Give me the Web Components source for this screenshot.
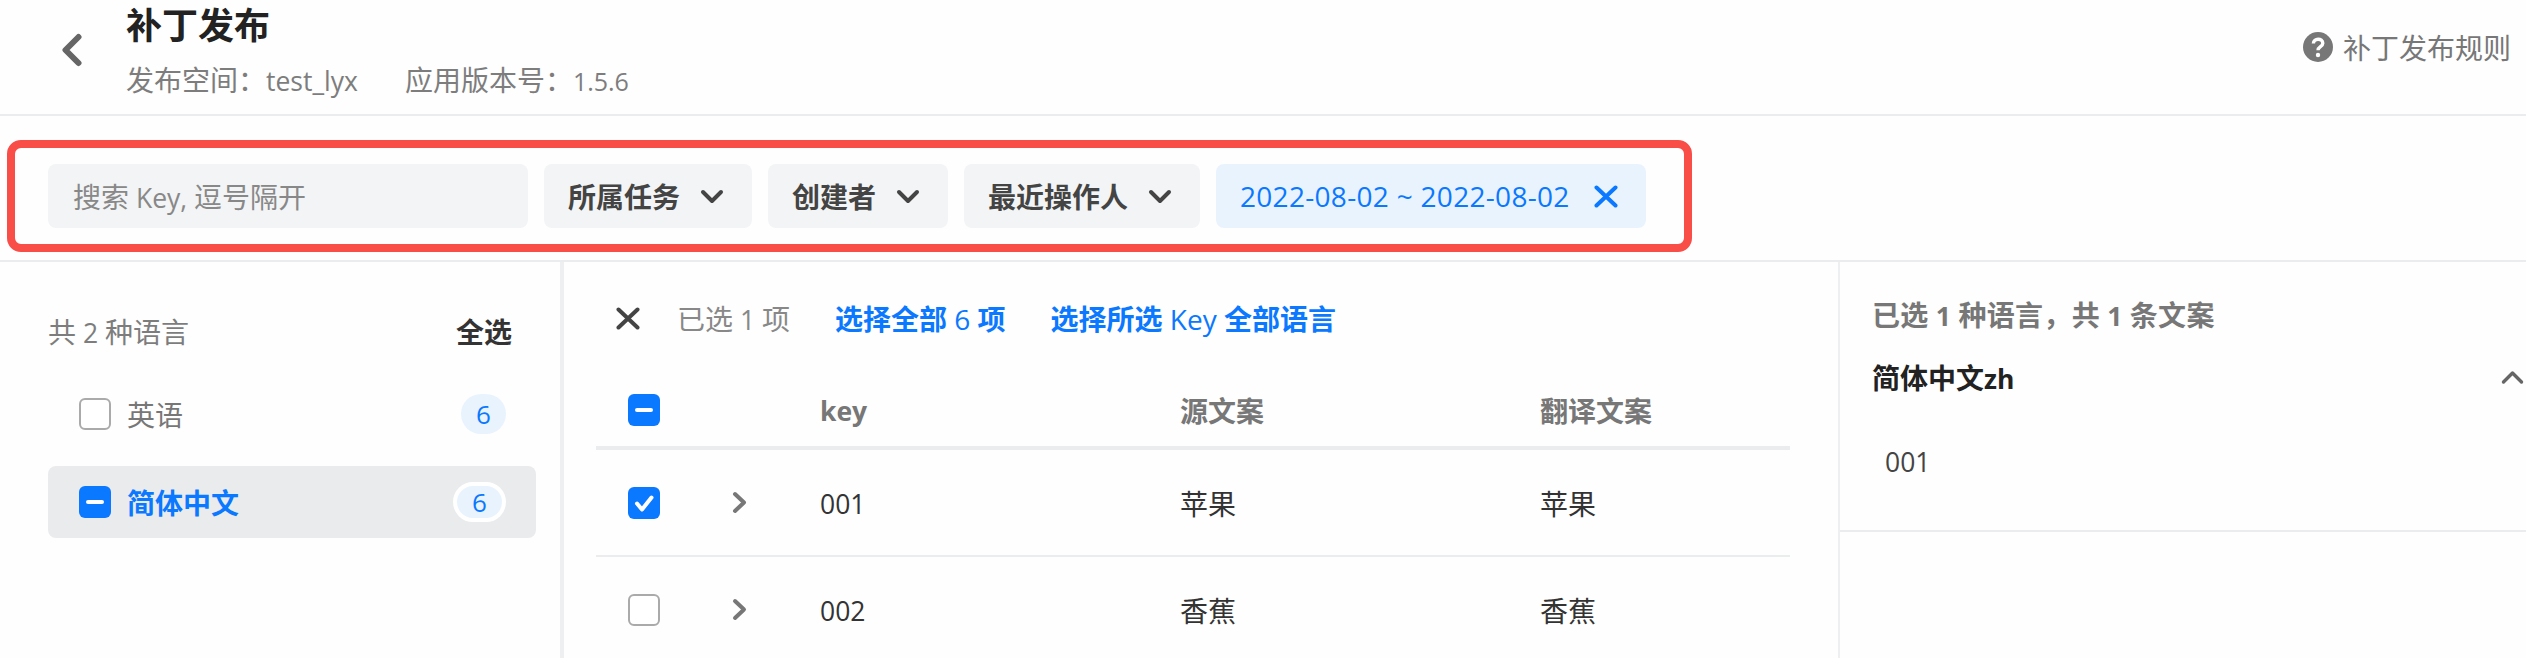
<!DOCTYPE html>
<html lang="zh">
<head>
<meta charset="utf-8">
<title>补丁发布</title>
<style>
  html, body { margin: 0; background: #fefefe; }
  body {
    font-family: "Open Sans", "Noto Sans CJK SC", sans-serif;
    font-size: 28px;
    color: #222;
    overflow: hidden;
  }
  .l { font-size: 26.5px; }
  .thin { font-size: 28px; font-weight: 400; }
  .date { font-size: 28px; letter-spacing: 0.3px; }
</style>
</head>
<body>
<patch-page>
  <patch-header>
    <span slot="title">补丁发布</span>
    <span slot="meta">发布空间：<span class="l">test_lyx</span></span>
    <span slot="meta">应用版本号：<span class="l" style="font-size:25px">1.5.6</span></span>
    <span slot="help">补丁发布规则</span>
  </patch-header>
  <filter-bar>
    <search-box>搜索<span class="l"> Key, </span>逗号隔开</search-box>
    <filter-select style="width:208px">所属任务</filter-select>
    <filter-select style="width:180px">创建者</filter-select>
    <filter-select style="width:236px">最近操作人</filter-select>
    <date-chip><span class="date">2022-08-02 ~ 2022-08-02</span></date-chip>
  </filter-bar>
  <patch-main>
    <lang-sidebar slot="side">
      <span slot="total">共<span class="l"> 2 </span>种语言</span>
      <span slot="all">全选</span>
      <lang-item count="6">英语</lang-item>
      <lang-item count="6" active>简体中文</lang-item>
    </lang-sidebar>
    <key-table slot="center">
      <span slot="picked">已选<span class="l"> 1 </span>项</span>
      <span slot="link">选择全部<span class="l thin"> 6 </span>项</span>
      <span slot="link">选择所选<span class="l thin"> Key </span>全部语言</span>
      <table-row head state="minus"><span class="l">key</span><span slot="src">源文案</span><span slot="dst">翻译文案</span></table-row>
      <table-row state="check"><span class="l">001</span><span slot="src">苹果</span><span slot="dst">苹果</span></table-row>
      <table-row><span class="l">002</span><span slot="src">香蕉</span><span slot="dst">香蕉</span></table-row>
    </key-table>
    <selection-panel slot="side-right">
      <span slot="sum">已选<span class="l"> 1 </span>种语言，共<span class="l"> 1 </span>条文案</span>
      <span slot="lang">简体中文<span class="l">zh</span></span>
      <span class="l">001</span>
    </selection-panel>
  </patch-main>
  <water-mark></water-mark>
</patch-page>

<script>
const chevron = (d, w, h, color, sw) =>
  `<svg width="${w}" height="${h}" viewBox="0 0 ${w} ${h}" fill="none" stroke="${color}" stroke-width="${sw}" stroke-linecap="round" stroke-linejoin="round"><path d="${d}"/></svg>`;

window.customElements.define(
  "patch-page",
  class extends HTMLElement {
    constructor() {
      super();
      const root = this.attachShadow({ mode: "open" });
      root.innerHTML = `
    <style>
      :host {
        display: flex;
        flex-direction: column;
        position: relative;
        width: 2526px;
        height: 658px;
        overflow: hidden;
      }
    </style>
    <slot></slot>
    `;
    }
  }
);

window.customElements.define(
  "patch-header",
  class extends HTMLElement {
    constructor() {
      super();
      const root = this.attachShadow({ mode: "open" });
      root.innerHTML = `
    <style>
      :host {
        display: flex;
        flex: none;
        height: 114px;
        border-bottom: 2px solid #ebeced;
        padding-left: 61px;
      }
      .back { margin-top: 33px; width: 21px; height: 34px; flex: none; }
      .text { margin-left: 44px; flex: 1; }
      .title { font-size: 36px; font-weight: 700; line-height: 44px; margin-top: 4px; color: #222; }
      .meta { display: flex; gap: 47px; margin-top: 10px; line-height: 44px; color: #7d7d7d; }
      .help {
        display: flex;
        align-items: center;
        gap: 10px;
        height: 40px;
        margin: 27px 15px 0 0;
        color: #777;
      }
    </style>
    <div class="back">${chevron("M17.5 4 L4.5 17 L17.5 30", 21, 34, "#666", 6)}</div>
    <div class="text">
      <div class="title"><slot name="title"></slot></div>
      <div class="meta"><slot name="meta"></slot></div>
    </div>
    <div class="help">
      <svg width="30" height="30" viewBox="0 0 30 30">
        <circle cx="15" cy="15" r="15" fill="#777"/>
        <path d="M10.4 11.6 C10.4 5.8 19.8 5.8 19.8 11.2 C19.8 14.6 15 14.6 15 18.2" fill="none" stroke="#fff" stroke-width="3.4"/>
        <circle cx="15" cy="23" r="2.2" fill="#fff"/>
      </svg>
      <slot name="help"></slot>
    </div>
    `;
    }
  }
);

window.customElements.define(
  "filter-bar",
  class extends HTMLElement {
    constructor() {
      super();
      const root = this.attachShadow({ mode: "open" });
      root.innerHTML = `
    <style>
      :host {
        display: flex;
        flex: none;
        position: relative;
        box-sizing: border-box;
        height: 146px;
        gap: 16px;
        padding: 48px 0 0 48px;
        border-bottom: 2px solid #ebeced;
      }
      .frame {
        position: absolute;
        left: 7px;
        top: 24px;
        width: 1685px;
        height: 112px;
        box-sizing: border-box;
        border: 8px solid #f94d48;
        border-radius: 14px;
      }
    </style>
    <slot></slot>
    <div class="frame"></div>
    `;
    }
  }
);

window.customElements.define(
  "search-box",
  class extends HTMLElement {
    constructor() {
      super();
      const root = this.attachShadow({ mode: "open" });
      root.innerHTML = `
    <style>
      :host {
        display: flex;
        align-items: center;
        box-sizing: border-box;
        width: 480px;
        height: 64px;
        padding-left: 25px;
        border-radius: 8px;
        background: #f3f4f5;
        color: #888;
      }
    </style>
    <span><slot></slot></span>
    `;
    }
  }
);

window.customElements.define(
  "filter-select",
  class extends HTMLElement {
    constructor() {
      super();
      const root = this.attachShadow({ mode: "open" });
      root.innerHTML = `
    <style>
      :host {
        display: flex;
        align-items: center;
        box-sizing: border-box;
        height: 64px;
        padding-left: 24px;
        border-radius: 8px;
        background: #f3f4f5;
        color: #444;
        font-weight: 700;
      }
      svg { margin-left: 20px; }
    </style>
    <slot></slot>
    ${chevron("M3 3 L12 12 L21 3", 24, 15, "#444", 4)}
    `;
    }
  }
);

window.customElements.define(
  "date-chip",
  class extends HTMLElement {
    constructor() {
      super();
      const root = this.attachShadow({ mode: "open" });
      root.innerHTML = `
    <style>
      :host {
        display: flex;
        align-items: center;
        justify-content: space-between;
        box-sizing: border-box;
        width: 430px;
        height: 64px;
        padding: 0 28px 0 24px;
        border-radius: 8px;
        background: #e9f3fe;
        color: #0a78ff;
      }
    </style>
    <slot></slot>
    ${chevron("M2.5 2.5 L21.5 20.5 M21.5 2.5 L2.5 20.5", 24, 23, "#0a78ff", 4)}
    `;
    }
  }
);

window.customElements.define(
  "patch-main",
  class extends HTMLElement {
    constructor() {
      super();
      const root = this.attachShadow({ mode: "open" });
      root.innerHTML = `
    <style>
      :host { display: flex; flex: 1; min-height: 0; }
    </style>
    <slot name="side"></slot>
    <slot name="center"></slot>
    <slot name="side-right"></slot>
    `;
    }
  }
);

window.customElements.define(
  "x-check",
  class extends HTMLElement {
    connectedCallback() {
      const root = this.shadowRoot || this.attachShadow({ mode: "open" });
      const state = this.getAttribute("state");
      const mark = state === "minus"
        ? `<path d="M9 16 H23" stroke="#fff" stroke-width="4" stroke-linecap="round"/>`
        : state === "check"
          ? `<path d="M9 16.5 L14 22.5 L23.5 10.5" fill="none" stroke="#fff" stroke-width="4" stroke-linecap="round" stroke-linejoin="round"/>`
          : "";
      const box = state
        ? `<rect width="32" height="32" rx="6" fill="#0a78ff"/>`
        : `<rect x="1" y="1" width="30" height="30" rx="5" fill="#fff" stroke="#aaa" stroke-width="2"/>`;
      root.innerHTML = `
    <style>
      :host { display: block; flex: none; width: 32px; height: 32px; }
      svg { display: block; }
    </style>
    <svg width="32" height="32" viewBox="0 0 32 32">${box}${mark}</svg>
    `;
    }
  }
);

window.customElements.define(
  "lang-sidebar",
  class extends HTMLElement {
    constructor() {
      super();
      const root = this.attachShadow({ mode: "open" });
      root.innerHTML = `
    <style>
      :host {
        display: block;
        flex: none;
        box-sizing: border-box;
        width: 564px;
        padding: 49px 24px 0 48px;
        border-right: 4px solid #eeeff0;
      }
      .top {
        display: flex;
        justify-content: space-between;
        align-items: center;
        height: 40px;
        margin-bottom: 27px;
        padding-right: 24px;
        color: #7d7d7d;
      }
      .all { color: #333; font-weight: 700; }
      .list { display: flex; flex-direction: column; gap: 16px; }
    </style>
    <div class="top">
      <slot name="total"></slot>
      <span class="all"><slot name="all"></slot></span>
    </div>
    <div class="list"><slot></slot></div>
    `;
    }
  }
);

window.customElements.define(
  "lang-item",
  class extends HTMLElement {
    connectedCallback() {
      const root = this.shadowRoot || this.attachShadow({ mode: "open" });
      const active = this.hasAttribute("active");
      root.innerHTML = `
    <style>
      :host {
        display: flex;
        align-items: center;
        gap: 16px;
        height: 72px;
        padding: 0 30px 0 31px;
        border-radius: 8px;
        color: ${active ? "#0a78ff" : "#777"};
        font-weight: ${active ? 700 : 400};
        background: ${active ? "#e9ebec" : "transparent"};
      }
      .name { flex: 1; }
      .count {
        display: flex;
        align-items: center;
        justify-content: center;
        box-sizing: content-box;
        width: 45px;
        height: ${active ? 32 : 40}px;
        border-radius: 20px;
        background: #e9f3fe;
        color: #0a78ff;
        font-size: 26px;
        font-weight: 400;
        ${active ? "border: 4px solid #fff;" : ""}
      }
    </style>
    <x-check ${active ? 'state="minus"' : ""}></x-check>
    <span class="name"><slot></slot></span>
    <span class="count">${this.getAttribute("count")}</span>
    `;
    }
  }
);

window.customElements.define(
  "key-table",
  class extends HTMLElement {
    constructor() {
      super();
      const root = this.attachShadow({ mode: "open" });
      root.innerHTML = `
    <style>
      :host {
        display: block;
        flex: none;
        box-sizing: border-box;
        width: 1276px;
        padding-left: 32px;
        border-right: 2px solid #eeeff0;
      }
      .actions {
        display: flex;
        align-items: center;
        height: 40px;
        margin: 36px 0 36px 20px;
        color: #888;
      }
      svg { margin-right: 37px; }
      .links { display: flex; gap: 45px; margin-left: 45px; color: #0a78ff; font-weight: 700; }
      .rows { width: 1194px; }
    </style>
    <div class="actions">
      ${chevron("M2.5 2.5 L21.5 20.5 M21.5 2.5 L2.5 20.5", 24, 23, "#444", 4)}
      <slot name="picked"></slot>
      <div class="links"><slot name="link"></slot></div>
    </div>
    <div class="rows"><slot></slot></div>
    `;
    }
  }
);

window.customElements.define(
  "table-row",
  class extends HTMLElement {
    connectedCallback() {
      const root = this.shadowRoot || this.attachShadow({ mode: "open" });
      const head = this.hasAttribute("head");
      const state = this.getAttribute("state");
      root.innerHTML = `
    <style>
      :host {
        display: grid;
        grid-template-columns: 104px 120px 360px 360px 1fr;
        align-items: center;
        box-sizing: border-box;
        height: ${head ? 76 : 107}px;
        border-bottom: ${head ? 4 : 2}px solid #ebeced;
        color: ${head ? "#777" : "#333"};
        font-weight: ${head ? 700 : 400};
      }
      x-check { margin-left: 32px; }
      .arrow { display: flex; margin-left: 32px; }
    </style>
    <x-check ${state ? `state="${state}"` : ""}></x-check>
    <div class="arrow">${head ? "" : chevron("M3 3 L12 11.5 L3 20", 15, 23, "#777", 4)}</div>
    <div><slot></slot></div>
    <div><slot name="src"></slot></div>
    <div><slot name="dst"></slot></div>
    `;
    }
  }
);

window.customElements.define(
  "selection-panel",
  class extends HTMLElement {
    constructor() {
      super();
      const root = this.attachShadow({ mode: "open" });
      root.innerHTML = `
    <style>
      :host { display: block; flex: 1; }
      .box {
        box-sizing: border-box;
        height: 270px;
        padding: 33px 2px 0 32px;
        border-bottom: 2px solid #ebeced;
      }
      .sum { line-height: 40px; color: #777; font-weight: 700; letter-spacing: 0.3px; }
      .lang {
        display: flex;
        align-items: center;
        justify-content: space-between;
        height: 40px;
        margin-top: 21px;
        color: #222;
        font-weight: 700;
      }
      .value { margin: 44px 0 0 13px; line-height: 40px; color: #444; }
    </style>
    <div class="box">
      <div class="sum"><slot name="sum"></slot></div>
      <div class="lang">
        <slot name="lang"></slot>
        ${chevron("M2.5 12 L11.5 3 L20.5 12", 23, 15, "#666", 3.4)}
      </div>
      <div class="value"><slot></slot></div>
    </div>
    `;
    }
  }
);

window.customElements.define(
  "water-mark",
  class extends HTMLElement {
    constructor() {
      super();
      const root = this.attachShadow({ mode: "open" });
      const cells = Array.from({ length: 27 }, () => `<div class="cell"><span>wangyingjie.yc</span></div>`).join("");
      root.innerHTML = `
    <style>
      :host {
        position: absolute;
        left: 5px;
        top: -106px;
        display: grid;
        grid-template-columns: repeat(9, 300px);
        grid-auto-rows: 297px;
        pointer-events: none;
      }
      .cell { display: flex; align-items: center; justify-content: center; }
      span {
        transform: rotate(-16deg);
        font: 34px "Liberation Sans", sans-serif;
        color: rgba(0, 0, 0, 0.014);
        white-space: nowrap;
      }
    </style>
    ${cells}
    `;
    }
  }
);
</script>
</body>
</html>
